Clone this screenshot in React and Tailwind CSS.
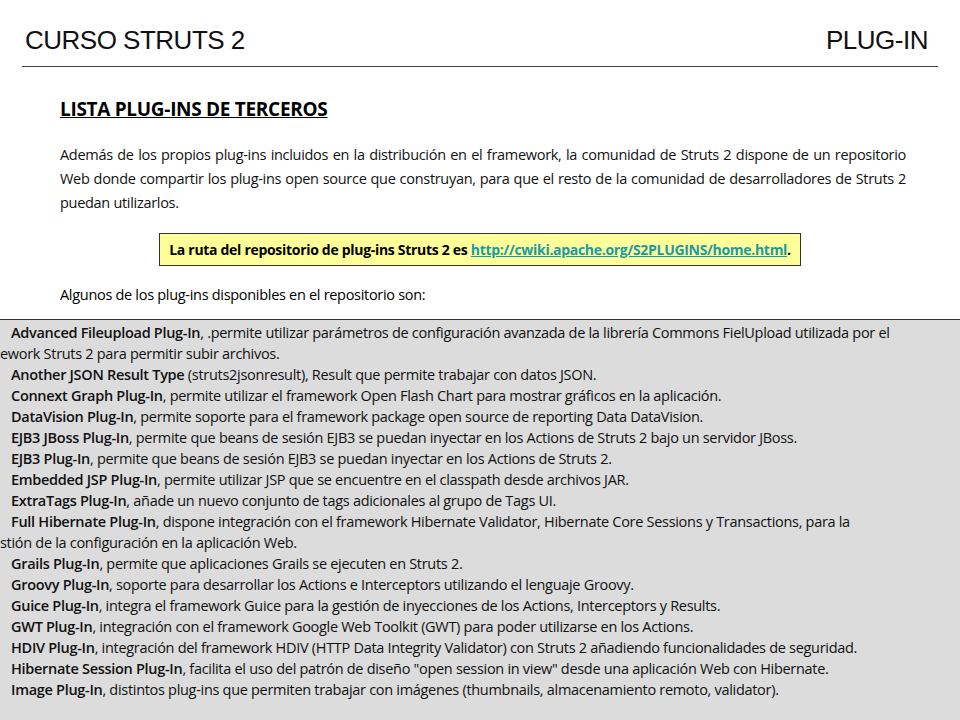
const items = [
  ['Advanced Fileupload Plug-In', ', .permite utilizar parámetros de configuración avanzada de la librería Commons FielUpload utilizada por el', 'ework Struts 2 para permitir subir archivos.'],
  ['Another JSON Result Type', ' (struts2jsonresult), Result que permite trabajar con datos JSON.'],
  ['Connext Graph Plug-In', ', permite utilizar el framework Open Flash Chart para mostrar gráficos en la aplicación.'],
  ['DataVision Plug-In', ', permite soporte para el framework package open source de reporting Data DataVision.'],
  ['EJB3 JBoss Plug-In', ', permite que beans de sesión EJB3 se puedan inyectar en los Actions de Struts 2 bajo un servidor JBoss.'],
  ['EJB3 Plug-In', ', permite que beans de sesión EJB3 se puedan inyectar en los Actions de Struts 2.'],
  ['Embedded JSP Plug-In', ', permite utilizar JSP que se encuentre en el classpath desde archivos JAR.'],
  ['ExtraTags Plug-In', ', añade un nuevo conjunto de tags adicionales al grupo de Tags UI.'],
  ['Full Hibernate Plug-In', ', dispone integración con el framework Hibernate Validator, Hibernate Core Sessions y Transactions, para la', 'stión de la configuración en la aplicación Web.'],
  ['Grails Plug-In', ', permite que aplicaciones Grails se ejecuten en Struts 2.'],
  ['Groovy Plug-In', ', soporte para desarrollar los Actions e Interceptors utilizando el lenguaje Groovy.'],
  ['Guice Plug-In', ', integra el framework Guice para la gestión de inyecciones de los Actions, Interceptors y Results.'],
  ['GWT Plug-In', ', integración con el framework Google Web Toolkit (GWT) para poder utilizarse en los Actions.'],
  ['HDIV Plug-In', ', integración del framework HDIV (HTTP Data Integrity Validator) con Struts 2 añadiendo funcionalidades de seguridad.'],
  ['Hibernate Session Plug-In', ', facilita el uso del patrón de diseño "open session in view" desde una aplicación Web con Hibernate.'],
  ['Image Plug-In', ', distintos plug-ins que permiten trabajar con imágenes (thumbnails, almacenamiento remoto, validator).'],
]

export default function App() {
  return (
    <div className="w-[960px] h-[720px] overflow-hidden bg-white text-black flex flex-col" style={{ fontFamily: '"Open Sans", Lato, sans-serif' }}>
      <div className="mx-[22px] mt-[24px] flex justify-between items-end border-b border-[#444] pb-[10px] pl-[3px] pr-[10px]" style={{ fontFamily: '"Liberation Sans", Arial, sans-serif' }}>
        <span className="text-[26px] leading-[32px] text-[#111] tracking-[-0.5px]">CURSO STRUTS 2</span>
        <span className="text-[26px] leading-[32px] text-[#111] tracking-[-0.5px]">PLUG-IN</span>
      </div>
      <div className="px-[60px] pr-[54px]">
        <h1 className="mt-[28px] text-[19px] font-bold underline leading-[28px] tracking-[-0.3px]">LISTA PLUG-INS DE TERCEROS</h1>
        <p className="mt-[20px] text-[14.5px] leading-[24px] text-justify text-[#111] tracking-[-0.3px]">
          Además de los propios plug-ins incluidos en la distribución en el framework, la comunidad de Struts 2 dispone de un repositorio Web donde compartir los plug-ins open source que construyan, para que el resto de la comunidad de desarrolladores de Struts 2 puedan utilizarlos.
        </p>
        <div className="flex justify-center mt-[18px] ml-[-6px]">
          <div className="bg-[#ffff99] border border-[#333] px-[9px] h-[33px] flex items-center text-[14px] font-bold whitespace-nowrap tracking-[-0.3px]">
            La ruta del repositorio de plug-ins Struts 2 es&nbsp;<span className="text-[#1a9aa6] underline">http://cwiki.apache.org/S2PLUGINS/home.html</span>.
          </div>
        </div>
        <p className="mt-[17px] text-[14.5px] leading-[24px] tracking-[-0.3px]">Algunos de los plug-ins disponibles en el repositorio son:</p>
      </div>
      <div className="mt-[12px] flex-1 bg-[#dcdcdc] border-t border-[#333] pt-[2px] text-[14.5px] leading-[21px] text-[#111] overflow-hidden tracking-[-0.3px]">
        {items.map(([b, t, cont]) => (
          <div key={b}>
            <div className="pl-[11px] whitespace-nowrap"><b className="font-semibold">{b}</b>{t}</div>
            {cont && <div className="whitespace-nowrap">{cont}</div>}
          </div>
        ))}
      </div>
    </div>
  )
}
